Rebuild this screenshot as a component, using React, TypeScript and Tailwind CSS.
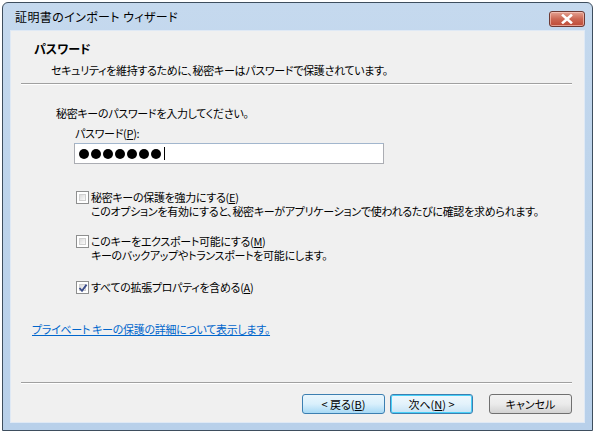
import React from "react";

const font = "font-['Meiryo_UI','Noto_Sans_CJK_JP',sans-serif] [font-feature-settings:'palt']";

function CheckBox({ checked }: { checked?: boolean }) {
  return (
    <div className="relative mt-[1px] h-[13px] w-[13px] shrink-0 border border-[#8e8f8f] bg-white">
      <div className="absolute inset-[2px] border border-[#d0d0d0] bg-gradient-to-br from-[#dcdcdc] to-[#fbfbfb]" />
      {checked && (
        <svg className="absolute left-[1px] top-[1px]" width="10" height="10" viewBox="0 0 10 10">
          <path d="M1.5 5 L4 7.8 L8.6 1.6" fill="none" stroke="#3b4c8a" strokeWidth="1.8" />
        </svg>
      )}
    </div>
  );
}

function Btn({ children, variant }: { children: React.ReactNode; variant: "hover" | "default" | "normal" }) {
  const cls =
    variant === "hover"
      ? "border-[#3c7fb1] bg-gradient-to-b from-[#eaf6fd] via-[#d9f0fc] to-[#a7d9f5]"
      : variant === "default"
      ? "border-[#3c7fb1] bg-gradient-to-b from-[#f0f8fd] via-[#e3f2fb] to-[#c7e3f5] shadow-[inset_0_0_0_1px_#48d0f8]"
      : "border-[#707070] bg-gradient-to-b from-[#f2f2f2] via-[#ebebeb] to-[#d2d2d2]";
  return (
    <div
      className={`flex h-[20px] w-[83px] items-center justify-center rounded-[3px] border text-[11px] leading-[14px] text-black ${cls}`}
    >
      {children}
    </div>
  );
}

export default function App() {
  return (
    <div className={`h-[433px] w-[595px] bg-white ${font}`}>
      <div className="ml-[2px] mt-[2px] flex h-[429px] w-[591px] flex-col rounded-t-[6px] border border-[#3e4e5e] bg-gradient-to-b from-[#c5d9ee] via-[#bcd3eb] to-[#b8d0ea]">
        {/* title bar */}
        <div className="relative flex h-[27px] shrink-0 items-center">
          <span className="pl-[12px] pt-[1px] text-[12px] leading-[16px] tracking-[0.4px] text-black">証明書のインポート ウィザード</span>
          <div className="absolute left-[546px] top-[8px] flex h-[16px] w-[36px] items-center justify-center rounded-[3px] border border-[#6d3a34] bg-gradient-to-b from-[#e3a293] via-[#cc6753] to-[#bd4a36] shadow-[inset_0_0_0_1px_rgba(255,210,200,0.6)]">
            <svg width="12" height="10" viewBox="0 0 12 10">
              <path d="M2 1.5 L10 8.5 M10 1.5 L2 8.5" stroke="#fff" strokeWidth="2.6" strokeLinecap="square" />
            </svg>
          </div>
        </div>
        {/* content */}
        <div className="mx-[7px] mb-[7px] flex flex-1 flex-col border border-[#dfe9f5] bg-[#f0f0f0] text-[11px] leading-[14px] tracking-[-0.3px] text-black">
          <div className="pl-[23px] pt-[10px] text-[12px] font-bold leading-[16px] tracking-normal">パスワード</div>
          <div className="mt-[6px] pl-[40px]">セキュリティを維持するために、秘密キーはパスワードで保護されています。</div>
          <div className="ml-[10px] mr-[12px] mt-[6px] h-[2px] border-b border-t border-b-white border-t-[#a0a0a0]" />
          <div className="mt-[21px] pl-[45px]">秘密キーのパスワードを入力してください。</div>
          <div className="mt-[6px] pl-[64px]">
            パスワード(<span className="underline">P</span>):
          </div>
          <div className="ml-[63px] mt-[3px] flex h-[21px] w-[310px] items-center gap-[2px] border border-[#abadb3] border-t-[#a2b6cd] bg-white pl-[4px]">
            {[0, 1, 2, 3, 4, 5, 6].map((i) => (
              <span key={i} className="h-[10px] w-[10px] rounded-full bg-black" />
            ))}
            <span className="ml-[1px] h-[13px] w-[1px] bg-black" />
          </div>

          <div className="ml-[65px] mt-[26px] flex gap-[2px]">
            <CheckBox />
            <div>
              <div>
                秘密キーの保護を強力にする(<span className="underline">E</span>)
              </div>
              <div>このオプションを有効にすると、秘密キーがアプリケーションで使われるたびに確認を求められます。</div>
            </div>
          </div>

          <div className="ml-[65px] mt-[16px] flex gap-[2px]">
            <CheckBox />
            <div>
              <div>
                このキーをエクスポート可能にする(<span className="underline">M</span>)
              </div>
              <div>キーのバックアップやトランスポートを可能にします。</div>
            </div>
          </div>

          <div className="ml-[65px] mt-[18px] flex gap-[2px]">
            <CheckBox checked />
            <div>
              すべての拡張プロパティを含める(<span className="underline">A</span>)
            </div>
          </div>

          <div className="mt-[28px] pl-[21px]">
            <span className="text-[#0066cc] underline">プライベート キーの保護の詳細について表示します。</span>
          </div>

          <div className="mt-auto ml-[10px] mr-[12px] h-[2px] border-b border-t border-b-white border-t-[#a0a0a0]" />
          <div className="mb-[8px] mr-[12px] mt-[10px] flex justify-end tracking-normal">
            <Btn variant="hover">&lt; 戻る(<span className="underline">B</span>)</Btn>
            <div className="ml-[5px]">
              <Btn variant="default">次へ(<span className="underline">N</span>) &gt;</Btn>
            </div>
            <div className="ml-[16px]">
              <Btn variant="normal">キャンセル</Btn>
            </div>
          </div>
        </div>
      </div>
    </div>
  );
}
